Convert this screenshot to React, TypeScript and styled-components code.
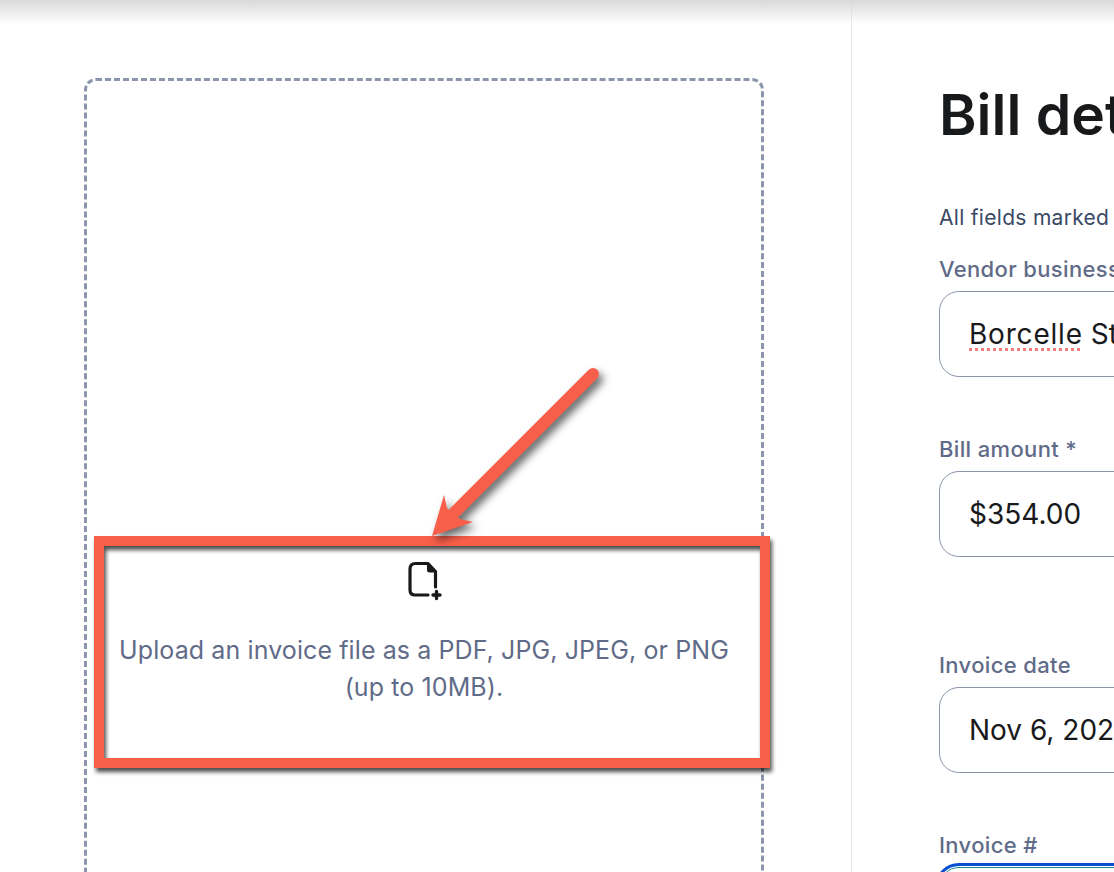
import React from "react";
import styled, { createGlobalStyle } from "styled-components";

const GlobalStyle = createGlobalStyle`
  html, body {
    margin: 0;
    padding: 0;
    background: #ffffff;
  }
  * {
    box-sizing: border-box;
  }
`;

const Page = styled.div`
  position: relative;
  display: flex;
  width: 1114px;
  height: 872px;
  overflow: hidden;
  background: #ffffff;
  font-family: Inter, "Liberation Sans", sans-serif;
`;

const TopShade = styled.div`
  position: absolute;
  top: 0;
  left: 0;
  right: 0;
  height: 24px;
  background: linear-gradient(#d9d9d9, rgba(255, 255, 255, 0));
`;

const LeftPanel = styled.section`
  flex: 0 0 852px;
  height: 1200px;
  padding: 78px 0 0 84px;
  border-right: 1px solid #e4e6ea;
`;

const DropZone = styled.div`
  display: flex;
  flex-direction: column;
  align-items: center;
  justify-content: center;
  width: 680px;
  height: 1110px;
  border: 3px dashed #8b95ab;
  border-radius: 12px;
`;

const DropText = styled.p`
  width: 630px;
  margin: 31px 0 0;
  color: #5f6b88;
  font-size: 25px;
  line-height: 37px;
  letter-spacing: 0.1px;
  text-align: center;
`;

const RightPanel = styled.section`
  flex: 1;
  padding: 79px 0 0 87px;
  white-space: nowrap;
`;

const Title = styled.h1`
  margin: 0;
  color: #18191b;
  font-size: 57px;
  font-weight: 600;
  line-height: 72px;
`;

const Note = styled.p`
  margin: 54px 0 0;
  color: #3a4a66;
  font-size: 21px;
  line-height: 26px;
  letter-spacing: 0.3px;
`;

const Field = styled.div<{ $gap: number }>`
  margin-top: ${(p) => p.$gap}px;
  width: 420px;
`;

const Label = styled.label`
  display: block;
  height: 26px;
  margin-bottom: 9px;
  color: #5f6b88;
  font-size: 22px;
  font-weight: 500;
  line-height: 26px;
  letter-spacing: 0.35px;
`;

const InputBox = styled.div<{ $focused?: boolean }>`
  display: flex;
  align-items: center;
  height: 86px;
  padding-left: 29px;
  border: 1px solid #8b95ab;
  border-radius: 20px;
  color: #18191b;
  font-size: 28px;
  ${(p) =>
    p.$focused &&
    `
    border: 1px solid #1d8a8a;
    outline: 3px solid #0a4fd0;
    outline-offset: 1px;
  `}
`;

const Misspelled = styled.span`
  letter-spacing: 0.8px;
  text-decoration: underline dotted #f87a7a 3px;
  text-underline-offset: 4px;
`;

const Highlight = styled.div`
  position: absolute;
  left: 94px;
  top: 536px;
  width: 676px;
  height: 232px;
  border: 10px solid #f85f4a;
  filter: drop-shadow(2px 4px 2px rgba(0, 0, 0, 0.7));
`;

const ArrowSvg = styled.svg`
  position: absolute;
  left: 0;
  top: 0;
  filter: drop-shadow(4px 5px 4px rgba(0, 0, 0, 0.6));
`;

const FileIcon = () => (
  <svg width="36" height="40" viewBox="-1 0 36 40" fill="none">
    <path
      d="M28.5 26V10.5L21 2.5H8.5Q3 2.5 3 8V29Q3 34 8 34H21"
      stroke="#18191b"
      strokeWidth="3.2"
      strokeLinecap="round"
      strokeLinejoin="round"
    />
    <path d="M20 3V9Q20 11.5 22.5 11.5H28.5Z" fill="#18191b" />
    <path
      d="M29.5 30.5V37.5M26 34H33"
      stroke="#18191b"
      strokeWidth="3.4"
      strokeLinecap="round"
    />
  </svg>
);

const Arrow = () => (
  <ArrowSvg width="1114" height="872" viewBox="0 0 1114 872">
    <path
      d="M593 374L455 512"
      stroke="#f85f4a"
      strokeWidth="12"
      strokeLinecap="round"
    />
    <path d="M432 536L444 495L447 508L460 519L473 522Z" fill="#f85f4a" />
  </ArrowSvg>
);

const App: React.FC = () => {
  return (
    <Page>
      <GlobalStyle />
      <LeftPanel>
        <DropZone>
          <FileIcon />
          <DropText>
            Upload an invoice file as a PDF, JPG, JPEG, or PNG (up to 10MB).
          </DropText>
        </DropZone>
      </LeftPanel>
      <RightPanel>
        <Title>Bill details</Title>
        <Note>All fields marked with * are required</Note>
        <Field $gap={25}>
          <Label>Vendor business name *</Label>
          <InputBox>
            <span>
              <Misspelled>Borcelle</Misspelled> Studio
            </span>
          </InputBox>
        </Field>
        <Field $gap={59}>
          <Label>Bill amount *</Label>
          <InputBox>$354.00</InputBox>
        </Field>
        <Field $gap={95}>
          <Label>Invoice date</Label>
          <InputBox>Nov 6, 2024</InputBox>
        </Field>
        <Field $gap={59}>
          <Label>Invoice #</Label>
          <InputBox $focused />
        </Field>
      </RightPanel>
      <TopShade />
      <Highlight />
      <Arrow />
    </Page>
  );
};

export default App;
